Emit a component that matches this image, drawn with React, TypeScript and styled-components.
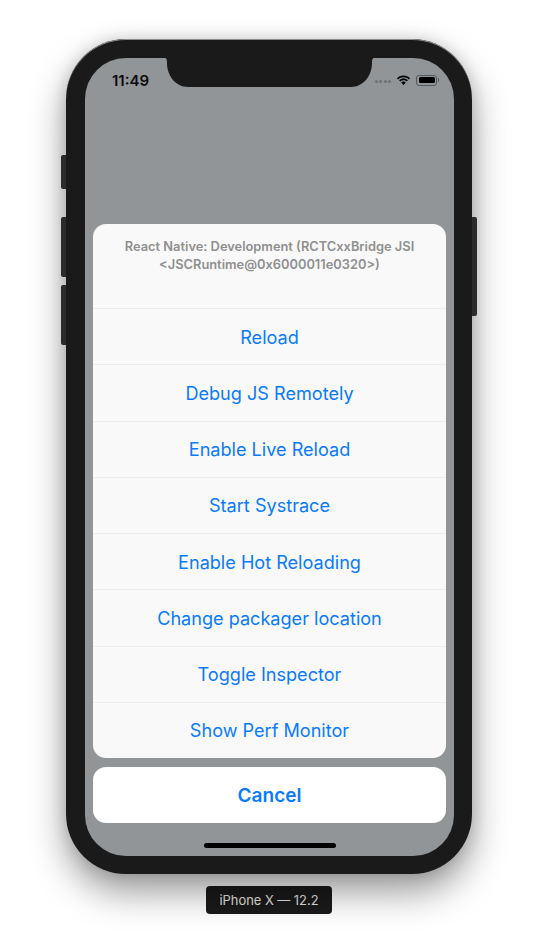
import React from "react";
import styled, { createGlobalStyle } from "styled-components";

const Global = createGlobalStyle`
  html, body { margin: 0; padding: 0; background: #fff; }
  body { font-family: Inter, "Liberation Sans", sans-serif; -webkit-font-smoothing: antialiased; }
  #root { width: 538px; height: 950px; overflow: hidden; }
`;

const Stage = styled.div`
  display: flex;
  flex-direction: column;
  align-items: center;
  padding-top: 39px;
`;

const Phone = styled.div`
  position: relative;
  box-sizing: border-box;
  width: 406px;
  height: 835px;
  padding: 19px 18px 18px 19px;
  background: #1a1a1a;
  border-radius: 60px;
  box-shadow: inset 0 1px 0 #8a8a8a, 0 18px 36px rgba(0, 0, 0, 0.4), 0 0 16px rgba(0, 0, 0, 0.14);
`;

const SideButton = styled.div<{ $side: "left" | "right"; $top: number; $h: number }>`
  position: absolute;
  top: ${(p) => p.$top}px;
  ${(p) => p.$side}: -5px;
  width: 5px;
  height: ${(p) => p.$h}px;
  background: #2b2b2b;
  border-radius: ${(p) => (p.$side === "left" ? "2px 0 0 2px" : "0 2px 2px 0")};
`;

const Screen = styled.div`
  position: relative;
  display: flex;
  flex-direction: column;
  height: 100%;
  background: #929598;
  border-radius: 41px;
  overflow: hidden;
`;

const Notch = styled.svg`
  position: absolute;
  top: 0;
  left: 80px;
`;

const StatusBar = styled.div`
  display: flex;
  align-items: center;
  justify-content: space-between;
  height: 44px;
  padding: 0 17px 0 27px;
  box-sizing: border-box;
`;

const Time = styled.span`
  font-size: 15px;
  font-weight: 600;
  color: #0b0b0c;
`;

const StatusIcons = styled.div`
  display: flex;
  align-items: center;
`;

const SignalDots = styled.div`
  display: flex;
  gap: 1.5px;
  margin: 3px 5px 0 0;
`;

const Dot = styled.span`
  width: 3px;
  height: 3px;
  border-radius: 50%;
  background: #6f7275;
`;

const Battery = styled.div`
  position: relative;
  box-sizing: border-box;
  width: 21px;
  height: 11px;
  margin-left: 5px;
  padding: 1.5px;
  border: 1px solid #55585a;
  border-radius: 3px;
  &::after {
    content: "";
    position: absolute;
    top: 2px;
    right: -3px;
    width: 1.5px;
    height: 4px;
    background: #55585a;
    border-radius: 0 1px 1px 0;
  }
`;

const BatteryFill = styled.div`
  height: 100%;
  background: #000;
  border-radius: 1.5px;
`;

const Sheets = styled.div`
  display: flex;
  flex-direction: column;
  gap: 9px;
  margin: auto 8px 0;
`;

const ActionGroup = styled.div`
  background: #f9f9f9;
  border-radius: 13px;
  overflow: hidden;
`;

const Title = styled.div`
  box-sizing: border-box;
  height: 84px;
  padding: 14px 10px 0;
  font-size: 12.85px;
  font-weight: 600;
  line-height: 18px;
  text-align: center;
  color: #8f8f8f;
`;

const Action = styled.div`
  box-sizing: border-box;
  display: flex;
  align-items: center;
  justify-content: center;
  height: 56.25px;
  border-top: 1px solid #ededed;
  font-size: 18.1px;
  color: #0a7aff;
`;

const CancelButton = styled.div`
  display: flex;
  align-items: center;
  justify-content: center;
  height: 56px;
  background: #fff;
  border-radius: 13px;
  font-size: 19px;
  font-weight: 600;
  color: #0a7aff;
`;

const HomeZone = styled.div`
  display: flex;
  justify-content: center;
  padding: 20px 0 8px;
`;

const HomeBar = styled.div`
  width: 132px;
  height: 5px;
  border-radius: 3px;
  background: #000;
`;

const DeviceLabel = styled.div`
  display: flex;
  align-items: center;
  justify-content: center;
  width: 126px;
  height: 28px;
  margin-top: 12px;
  background: #1a1a1a;
  border-radius: 4px;
  font-size: 12.9px;
  color: #e4e4e4;
`;

const actions = [
  "Reload",
  "Debug JS Remotely",
  "Enable Live Reload",
  "Start Systrace",
  "Enable Hot Reloading",
  "Change packager location",
  "Toggle Inspector",
  "Show Perf Monitor",
];

export default function App() {
  return (
    <Stage>
      <Global />
      <Phone>
        <SideButton $side="left" $top={116} $h={34} />
        <SideButton $side="left" $top={178} $h={60} />
        <SideButton $side="left" $top={246} $h={60} />
        <SideButton $side="right" $top={178} $h={99} />
        <Screen>
          <Notch width="209" height="29" viewBox="0 0 209 29">
            <path
              d="M0 0C1.5 0 2 1.5 2 5C2 18 11 29 23 29H186C198 29 207 18 207 5C207 1.5 207.5 0 209 0Z"
              fill="#1a1a1a"
            />
          </Notch>
          <StatusBar>
            <Time>11:49</Time>
            <StatusIcons>
              <SignalDots>
                <Dot />
                <Dot />
                <Dot />
                <Dot />
              </SignalDots>
              <svg width="15" height="11" viewBox="0 0 15 11">
                <path
                  d="M7.5 2.3c2.1 0 4 .8 5.4 2.1l1.1-1.2C12.3 1.6 10 .6 7.5.6S2.7 1.6 1 3.2l1.1 1.2c1.4-1.3 3.3-2.1 5.4-2.1Z"
                  fill="#000"
                />
                <path
                  d="M7.5 5.3c1.3 0 2.4.5 3.3 1.2l1.1-1.2C10.7 4.2 9.2 3.6 7.5 3.6s-3.2.6-4.4 1.7l1.1 1.2c.9-.7 2-1.2 3.3-1.2Z"
                  fill="#000"
                />
                <path d="M7.5 6.5c-1 0-1.8.4-2.3 1l2.3 2.6 2.3-2.6c-.5-.6-1.3-1-2.3-1Z" fill="#000" />
              </svg>
              <Battery>
                <BatteryFill />
              </Battery>
            </StatusIcons>
          </StatusBar>
          <Sheets>
            <ActionGroup>
              <Title>
                React Native: Development (RCTCxxBridge JSI
                <br />
                {"<JSCRuntime@0x6000011e0320>)"}
              </Title>
              {actions.map((a) => (
                <Action key={a}>{a}</Action>
              ))}
            </ActionGroup>
            <CancelButton>Cancel</CancelButton>
          </Sheets>
          <HomeZone>
            <HomeBar />
          </HomeZone>
        </Screen>
      </Phone>
      <DeviceLabel>iPhone X — 12.2</DeviceLabel>
    </Stage>
  );
}
